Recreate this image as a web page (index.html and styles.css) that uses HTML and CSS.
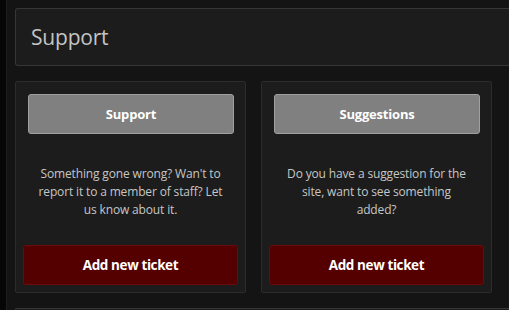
FILE: index.html
```html
<!DOCTYPE html>
<html lang="en">
<head>
<meta charset="utf-8">
<title>Support</title>
<link rel="stylesheet" href="styles.css">
</head>
<body>
<div class="layout">
  <aside class="rail"></aside>
  <main class="main">
    <header class="page-head">
      <h1 class="page-title">Support</h1>
    </header>
    <section class="cards">
      <article class="card">
        <div class="card-head"><button class="btn-title">Support</button></div>
        <p class="card-text">Something gone wrong? Wan't to report it to a member of staff? Let us know about it.</p>
        <div class="card-foot"><button class="btn-add">Add new ticket</button></div>
      </article>
      <article class="card">
        <div class="card-head"><button class="btn-title">Suggestions</button></div>
        <p class="card-text">Do you have a suggestion for the site, want to see something added?</p>
        <div class="card-foot"><button class="btn-add">Add new ticket</button></div>
      </article>
    </section>
    <section class="next-panel"></section>
  </main>
</div>
</body>
</html>
```

FILE: styles.css
```css
html, body {
  margin: 0;
  padding: 0;
  background: #141414;
  overflow: hidden;
}
body {
  font-family: "Open Sans", "Noto Sans", sans-serif;
  color: #c6c6c6;
}
.layout {
  display: flex;
  width: 100%;
  height: 310px;
}
.rail {
  width: 6px;
  flex: none;
  background: #060606;
  border-right: 1px solid #1e1e1e;
}
.main {
  flex: 1;
  padding: 8px 0 0 8px;
  display: flex;
  flex-direction: column;
  gap: 15px;
}
.page-head {
  height: 56px;
  flex: none;
  background: #1c1c1c;
  border: 1px solid #363636;
  border-right: none;
  border-radius: 3px 0 0 3px;
  display: flex;
  align-items: center;
  padding-left: 15px;
}
.page-title {
  margin: 0;
  font-size: 21px;
  font-weight: 400;
  color: #c4c4c4;
  letter-spacing: -0.2px;
}
.cards {
  display: grid;
  grid-template-columns: 231px 231px;
  gap: 15px;
}
.card {
  height: 212px;
  box-sizing: border-box;
  background: #1c1c1c;
  border: 1px solid #2c2c2c;
  border-radius: 2px;
  display: flex;
  flex-direction: column;
}
.card-head {
  padding: 12px 11px 0 12px;
}
.btn-title {
  display: block;
  width: 100%;
  height: 40px;
  background: #808080;
  border: 1px solid #a0a0a0;
  border-radius: 3px;
  color: #ffffff;
  font-family: inherit;
  font-weight: 700;
  font-size: 13px;
  letter-spacing: -0.2px;
}
.card-text {
  margin: 31px 0 0;
  padding: 0 22px;
  text-align: center;
  font-size: 12px;
  line-height: 18px;
  letter-spacing: -0.15px;
  color: #c6c6c6;
  flex: 1;
}
.card-foot {
  padding: 7px;
}
.btn-add {
  display: block;
  width: 100%;
  height: 40px;
  background: #550000;
  border: 1px solid #6a0a0a;
  border-radius: 3px;
  color: #ffffff;
  font-family: inherit;
  font-weight: 700;
  font-size: 13.5px;
  letter-spacing: -0.4px;
}
.next-panel {
  flex: 1;
  min-height: 0;
  background: #1c1c1c;
  border: 1px solid #363636;
  border-right: none;
  border-bottom: none;
  border-radius: 3px 0 0 0;
}
```
